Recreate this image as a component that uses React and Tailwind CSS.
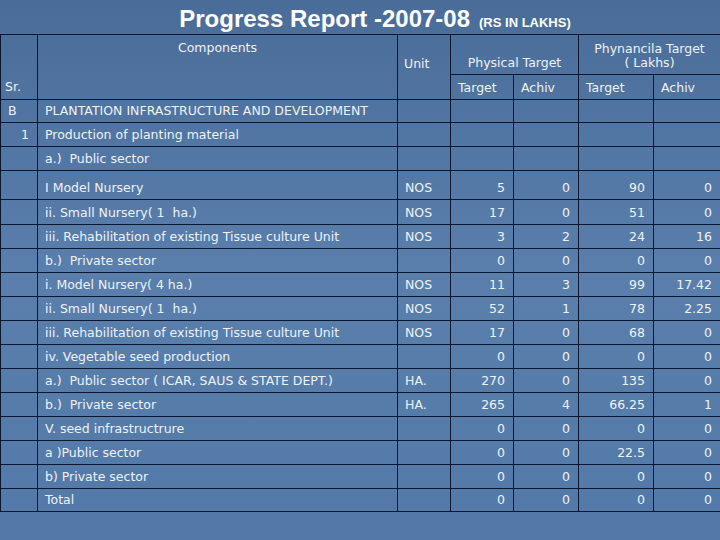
import React from "react";

const rows = [
  { h: "h-[23px]", sr: "B", srAlign: "left", label: "PLANTATION INFRASTRUCTURE AND DEVELOPMENT", unit: "", v: ["", "", "", ""] },
  { h: "h-[24px]", sr: "1", srAlign: "right", label: "Production of planting material", unit: "", v: ["", "", "", ""] },
  { h: "h-[24px]", sr: "", label: "a.)  Public sector", unit: "", v: ["", "", "", ""] },
  { h: "h-[29px]", sr: "", label: "I Model Nursery", unit: "NOS", v: ["5", "0", "90", "0"] },
  { h: "h-[25px]", sr: "", label: "ii. Small Nursery( 1  ha.)", unit: "NOS", v: ["17", "0", "51", "0"] },
  { h: "h-[24px]", sr: "", label: "iii. Rehabilitation of existing Tissue culture Unit", unit: "NOS", v: ["3", "2", "24", "16"] },
  { h: "h-[24px]", sr: "", label: "b.)  Private sector", unit: "", v: ["0", "0", "0", "0"] },
  { h: "h-[24px]", sr: "", label: "i. Model Nursery( 4 ha.)", unit: "NOS", v: ["11", "3", "99", "17.42"] },
  { h: "h-[24px]", sr: "", label: "ii. Small Nursery( 1  ha.)", unit: "NOS", v: ["52", "1", "78", "2.25"] },
  { h: "h-[24px]", sr: "", label: "iii. Rehabilitation of existing Tissue culture Unit", unit: "NOS", v: ["17", "0", "68", "0"] },
  { h: "h-[24px]", sr: "", label: "iv. Vegetable seed production", unit: "", v: ["0", "0", "0", "0"] },
  { h: "h-[24px]", sr: "", label: "a.)  Public sector ( ICAR, SAUS & STATE DEPT.)", unit: "HA.", v: ["270", "0", "135", "0"] },
  { h: "h-[24px]", sr: "", label: "b.)  Private sector", unit: "HA.", v: ["265", "4", "66.25", "1"] },
  { h: "h-[24px]", sr: "", label: "V. seed infrastructrure", unit: "", v: ["0", "0", "0", "0"] },
  { h: "h-[24px]", sr: "", label: "a )Public sector", unit: "", v: ["0", "0", "22.5", "0"] },
  { h: "h-[24px]", sr: "", label: "b) Private sector", unit: "", v: ["0", "0", "0", "0"] },
  { h: "h-[23px]", sr: "", label: "Total", unit: "", v: ["0", "0", "0", "0"] },
];

const cell = "border border-[#0b1630] p-0 align-bottom pb-[4px]";

export default function App() {
  return (
    <div className="w-[720px] h-[540px] overflow-hidden bg-gradient-to-b from-[#4a6c99] via-[#5a7fac] to-[#5279a8] text-[#eef2f7] font-['DejaVu_Sans',sans-serif] whitespace-pre">
      <div className="h-[34px] flex items-end justify-center pb-[3px] pl-[30px]">
        <span className="font-['Liberation_Sans',Arial,sans-serif] font-bold text-[24px] leading-none text-white">
          Progress Report -2007-08
        </span>
        <span className="font-['Liberation_Sans',Arial,sans-serif] font-bold text-[13px] leading-none text-white ml-[9px] mb-[2px]">
          (RS IN LAKHS)
        </span>
      </div>
      <table className="table-fixed border-collapse w-[722px] text-[12.5px] leading-[14px]">
        <colgroup>
          <col className="w-[37px]" />
          <col className="w-[360px]" />
          <col className="w-[53px]" />
          <col className="w-[63px]" />
          <col className="w-[65px]" />
          <col className="w-[75px]" />
          <col className="w-[69px]" />
        </colgroup>
        <thead>
          <tr className="h-[40px]">
            <td rowSpan={2} className={cell + " pl-[4px] pb-[5px]"}>Sr.</td>
            <td rowSpan={2} className="border border-[#0b1630] p-0 align-top pt-[6px] text-center">Components</td>
            <td rowSpan={2} className="border border-[#0b1630] p-0 align-middle pb-[6px] pl-[6px]">Unit</td>
            <td colSpan={2} className="border border-[#0b1630] p-0 align-bottom pb-[4px] text-center">Physical Target</td>
            <td colSpan={2} className="border border-[#0b1630] p-0 align-bottom pb-[4px] pr-[2px] text-center">{"Phynancila Target\n( Lakhs)"}</td>
          </tr>
          <tr className="h-[25px]">
            <td className={cell + " pl-[7px]"}>Target</td>
            <td className={cell + " pl-[7px]"}>Achiv</td>
            <td className={cell + " pl-[7px]"}>Target</td>
            <td className={cell + " pl-[7px]"}>Achiv</td>
          </tr>
        </thead>
        <tbody>
          {rows.map((r, i) => (
            <tr key={i} className={r.h}>
              <td className={cell + (r.srAlign === "right" ? " text-right pr-[8px]" : " pl-[7px]")}>{r.sr}</td>
              <td className={cell + " pl-[7px]"}>{r.label}</td>
              <td className={cell + " pl-[7px]"}>{r.unit}</td>
              {r.v.map((x, j) => (
                <td key={j} className={cell + " text-right " + (j === 3 ? "pr-[10px]" : "pr-[8px]")}>{x}</td>
              ))}
            </tr>
          ))}
        </tbody>
      </table>
    </div>
  );
}
